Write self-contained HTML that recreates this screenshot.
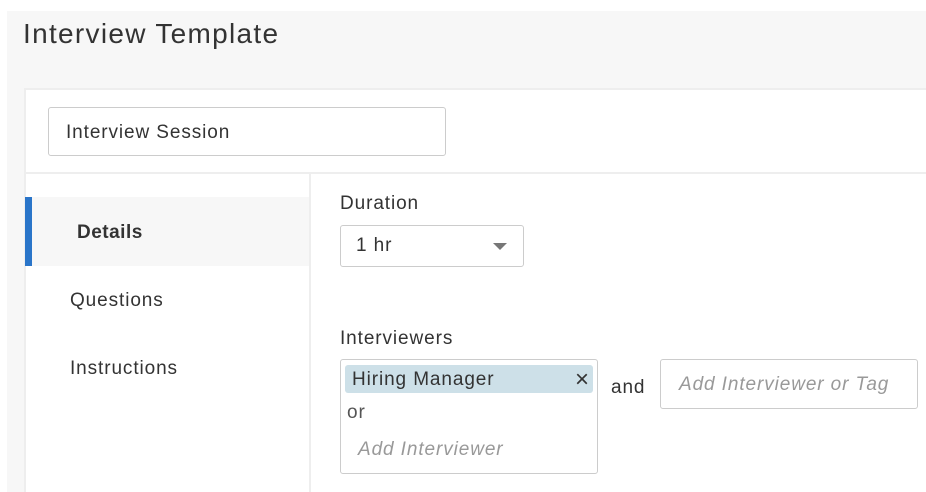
<!DOCTYPE html>
<html><head><meta charset="utf-8"><style>
*{box-sizing:border-box;margin:0;padding:0}
html{width:926px;height:492px;overflow:hidden}
body{width:926px;height:492px;background:#fff;font-family:"Liberation Sans",sans-serif;color:#333;position:relative;overflow:hidden;letter-spacing:0.9px}
.abs{position:absolute;white-space:nowrap}
.gray{left:7px;top:11px;right:0;bottom:0;background:#f7f7f7}
.title{left:23px;top:18px;font-size:28px;color:#333;letter-spacing:1.3px}
.card{left:24px;top:88px;right:0;bottom:0;background:#fff;border-top:2px solid #eee;border-left:2px solid #eee}
.input{left:48px;top:107px;width:398px;height:49px;border:1px solid #ccc;border-radius:3px;font-size:19px;padding:14px 0 0 17px;color:#333}
.hr{left:26px;top:172px;right:0;height:2px;background:#eee}
.vr{left:309px;top:174px;width:2px;bottom:0;background:#eee}
.sel{left:26px;top:197px;width:283px;height:69px;background:#f7f7f7}
.bar{left:25px;top:197px;width:7px;height:69px;background:#2a75c9}
.nav{font-size:19px;color:#333}
.lbl{font-size:19px;color:#333}
.box{border:1px solid #ccc;border-radius:3px;background:#fff}
</style></head><body>
<div class="abs gray"></div>
<div class="abs title">Interview Template</div>
<div class="abs card"></div>
<div class="abs input">Interview Session</div>
<div class="abs hr"></div>
<div class="abs vr"></div>
<div class="abs sel"></div>
<div class="abs bar"></div>
<div class="abs nav" style="left:77px;top:222px;font-weight:bold;letter-spacing:0.5px">Details</div>
<div class="abs nav" style="left:70px;top:290px">Questions</div>
<div class="abs nav" style="left:70px;top:358px">Instructions</div>
<div class="abs lbl" style="left:340px;top:193px">Duration</div>
<div class="abs box" style="left:340px;top:225px;width:184px;height:42px;font-size:19px;padding:9px 0 0 15px">1 hr</div>
<div class="abs" style="left:493px;top:243px;width:0;height:0;border-left:7px solid transparent;border-right:7px solid transparent;border-top:7px solid #777"></div>
<div class="abs lbl" style="left:340px;top:328px">Interviewers</div>
<div class="abs box" style="left:340px;top:359px;width:258px;height:115px"></div>
<div class="abs" style="left:345px;top:365px;width:248px;height:28px;background:#cde0e8;border-radius:3px;font-size:19px;padding:4px 0 0 7px">Hiring Manager<span style="position:absolute;right:4px;top:1px;font-size:24px;letter-spacing:0">×</span></div>
<div class="abs" style="left:347px;top:402px;font-size:19px;color:#555">or</div>
<div class="abs" style="left:358px;top:439px;font-size:19px;color:#999;font-style:italic">Add Interviewer</div>
<div class="abs" style="left:611px;top:377px;font-size:19px">and</div>
<div class="abs box" style="left:660px;top:359px;width:258px;height:50px;font-size:19px;color:#999;font-style:italic;padding:14px 0 0 18px">Add Interviewer or Tag</div>
</body></html>
